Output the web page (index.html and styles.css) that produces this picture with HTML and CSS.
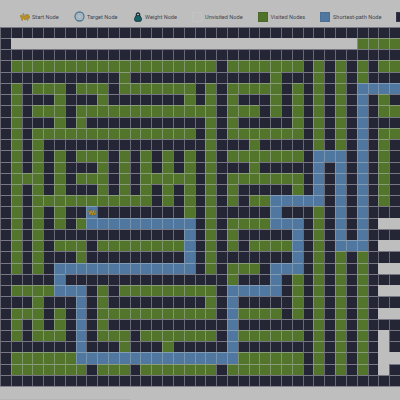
FILE: index.html
```
<!DOCTYPE html>
<html lang="en">
<head>
<meta charset="utf-8">
<title>Pathfinding Visualizer</title>
<link rel="stylesheet" href="styles.css">
</head>
<body>
<header class="legend">
  <div class="item start"><svg class="icon" viewBox="0 0 10 8"><path d="M.6 2 2.2 6.4 3.4 1.6 5 6.8 6 1.6 7.4 6.4 9.3 4 7.4 1.6" fill="none" stroke="#5b4d2c" stroke-width="1.7" stroke-opacity=".6"/><path d="M.6 2 2.2 6.4 3.4 1.6 5 6.8 6 1.6 7.4 6.4 9.3 4 7.4 1.6" fill="none" stroke="#c0921c" stroke-width="1.1"/></svg><span class="label">Start Node</span></div>
  <div class="item target"><svg class="icon" viewBox="0 0 11 11"><circle cx="5.5" cy="5.5" r="4.5" fill="#a9bac6" stroke="#54788f" stroke-width="1.3"/><circle cx="5.5" cy="5.5" r="2.2" fill="#b5bfc6" stroke="#91acbd" stroke-width=".7"/></svg><span class="label">Target Node</span></div>
  <div class="item weight"><svg class="icon" viewBox="0 0 8 10"><circle cx="4" cy="2.7" r="1.7" fill="none" stroke="#202c36" stroke-width="1.3"/><path d="M2 3.6H6L7.6 6.6Q7.6 9.2 6 9.4H2Q.4 9.2 .4 6.6Z" fill="#166264" stroke="#17333b" stroke-width=".8"/></svg><span class="label">Weight Node</span></div>
  <div class="item unvisited"><i class="swatch"></i><span class="label">Unvisited Node</span></div>
  <div class="item visited"><i class="swatch"></i><span class="label">Visited Nodes</span></div>
  <div class="item path"><i class="swatch"></i><span class="label">Shortest-path Node</span></div>
  <div class="item wall"><i class="swatch"></i></div>
</header>
<main class="board" id="board"></main>
<footer class="status"><div class="status-line"></div></footer>
<script src="board.js"></script>
</body>
</html>
```
FILE: styles.css
```
* { box-sizing: border-box; }
body {
  margin: 0;
  width: 400px;
  height: 400px;
  overflow: hidden;
  background: #bebebe;
  font-family: Roboto, "Liberation Sans", sans-serif;
  display: flex;
  flex-direction: column;
}
.legend {
  height: 26.7px;
  flex: none;
  display: flex;
  padding: 11px 0 0 20px;
  overflow: hidden;
}
.item {
  display: flex;
  flex: none;
  align-items: center;
  height: 11px;
  color: #3c4654;
}
.label { font-size: 5.6px; line-height: 11px; white-space: nowrap; padding-top: 1px; }
.icon { flex: none; display: block; }
.start { width: 53.5px; gap: 2px; }
.start .icon { width: 10px; height: 8px; }
.target { width: 60.5px; gap: 2.5px; }
.target .icon { width: 11px; height: 11px; }
.weight { width: 58px; gap: 3px; }
.weight .icon { width: 8px; height: 10px; }
.swatch { width: 10px; height: 10px; flex: none; border: 1px solid; }
.unvisited { width: 66px; gap: 3px; }
.unvisited .swatch { border-color: #c3c3c3; }
.visited { width: 62px; gap: 2.5px; }
.visited .swatch { background: #517329; border-color: #49682a; }
.path { width: 76px; gap: 3px; }
.path .swatch { background: #4f77a0; border-color: #4b6f94; }
.wall .swatch { background: #242638; border-color: #34364a; }

.board {
  flex: none;
  display: grid;
  grid-template-columns: repeat(37, 10.82px);
  grid-template-rows: repeat(32, 11.24px);
  width: 400.4px;
  margin-left: -0.1px;
  border-bottom: 1px solid #85868f;
}
.cell { border: 0 solid; border-width: 1px 0 0 1px; }
.cell-wall { background: #242535; border-color: #777884 #62636f #62636f #686975; }
.cell-open { background: #bebebe; border-color: #bebebe; }
.cell-visited { background: #52742b; border-color: #8a9c7b #7d9467 #7d9467 #80966c; }
.cell-path { background: #4f779f; border-color: #839db5 #7895b0 #7895b0 #7895b0; }
.cell-start { display: flex; align-items: center; justify-content: center; }
.cell-start svg { width: 9px; height: 7px; display: block; }
.status { flex: 1; display: flex; align-items: flex-end; }
.status-line { width: 131px; height: 1px; background: #b5b5b5; }
```
FILE: board.js
```
// Each row lists runs of non-wall cells: type + first column [+ "-" + last column].
// o = unvisited, g = visited, b = shortest path
const rows = [
  "",
  "o1-32 g33-36",
  "",
  "g1-19 g21-27 g29 g31 g33 g35-36",
  "g11 g25 g29 g31 g33",
  "g1 g3-5 g7-9 g11-17 g19 g21-25 g27 g29 g31 b33-36",
  "g1 g5 g9 g17 g19 g21 g25 g27 g29 g31 b33 g35",
  "g1 g3-5 g7-19 g21-23 g25 g27 g29 g31 b33 g35-36",
  "g1 g5 g7 g19 g21 g27 g29 g31 b33",
  "g1 g3-17 g19 g21-27 g29 g31 b33 g35-36",
  "g1 g3 g19 g23 g29 g31 b33 g35",
  "g1 g3 g5 g7-9 g11 g13 g15 g17 g19 g21-27 b29-31 b33 g35",
  "g1 g3 g5 g9 g11 g13 g15 g17 g19 g23 b29 b31 b33 g35",
  "g1-3 g5 g7-9 g11 g13-17 g19 g21-27 b29 b31 b33 g35",
  "g1 g3 g5 g9 g11 g13 g15 g17 g19 g21 g27 b29 b31 b33 g35",
  "g1 g3-13 g15 g17 g19 g21 g23-24 b25-29 b31 b33 g35",
  "g1 g3 g5 b8 g17 g19 b25 g29 b31 b33",
  "g1 g3 g5 g7 b8-17 g19 g21-24 b25-27 g29 b31 b33 o35-36",
  "g1 g3 b17 g19 g21 b27 g29 b31 b33",
  "g1 g3 g5-7 g9-16 b17 g19 g21 g23-26 b27 g29 b31-33 o35-36",
  "g1 g3 g7 b17 g19 b27 g29 g31 g33",
  "g1 g3 b5-17 g19 g21-23 b25-27 g29 g31 g33 o35-36",
  "b5 g21 b25 g27 g29 g31 g33",
  "g1-4 b5-7 g9 g11-19 b21-25 g27 g29 g31 g33 o35-36",
  "g3 b7 g9 g19 b21 g27 g29 g31 g33",
  "g1-3 g5 b7 g9-19 b21 g22-25 g27 g29 g31 g33 o35-36",
  "g1 g3 g5 b7 g9 b21 g29 g31 g33",
  "g1 g3-5 b7 g9-11 g13-19 b21 g22-27 g29 g31 g33 o35",
  "b7 g11 g15 b21 g29 g31 g33 o35",
  "g1-6 b7-21 g22-27 g29 g31 g33 o35-36",
  "g1-7 g9-11 g13-19 g21-27 g29 g31 g33 o35",
  ""
];
const names = { o: "open", g: "visited", b: "path" };
const board = document.getElementById("board");
rows.forEach((row, y) => {
  const line = new Array(37).fill("wall");
  row.split(" ").filter(Boolean).forEach(run => {
    const [a, z] = run.slice(1).split("-").map(Number);
    line.fill(names[run[0]], a, (z || a) + 1);
  });
  line.forEach((type, x) => {
    const cell = document.createElement("div");
    cell.className = "cell cell-" + type;
    if (y === 16 && x === 8) {
      cell.classList.add("cell-start");
      cell.append(document.querySelector(".start .icon").cloneNode(true));
    }
    board.append(cell);
  });
});
```
